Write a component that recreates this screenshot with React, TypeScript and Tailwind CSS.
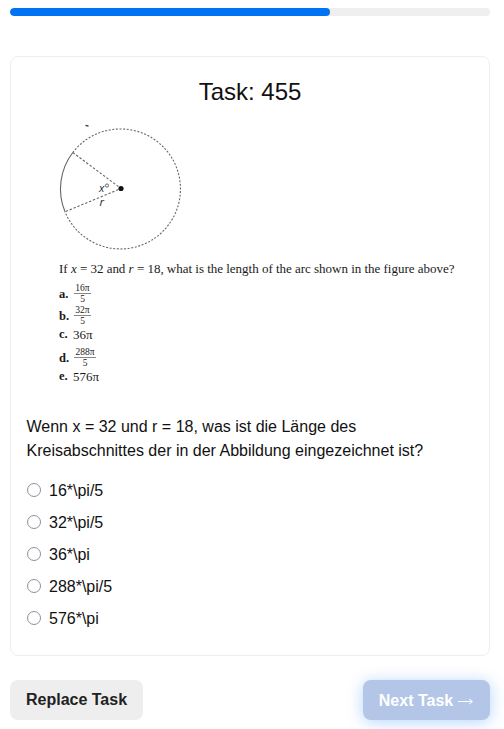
const OPTIONS = ['16*\\pi/5', '32*\\pi/5', '36*\\pi', '288*\\pi/5', '576*\\pi'];

function CircleFigure() {
  return (
    <svg width="170" height="140" viewBox="27 115 170 140" className="block" aria-hidden="true">
      <g fill="none" stroke="#666" strokeWidth="1.1">
        <path d="M72.8 152.5 A60 60 0 1 1 65 211.8" strokeDasharray="2 1.6" />
        <path d="M72.8 152.5 A60 60 0 0 0 65 211.8" />
        <path d="M72.8 152.5 L121 188.5 L65 211.8" strokeDasharray="2.4 1.8" />
      </g>
      <path d="M85.5 125.3 L88.5 126.2" stroke="#333" strokeWidth="1.3" />
      <circle cx="121" cy="188.5" r="2.6" fill="#111" />
      <g fill="#222" fontFamily="'Open Sans', sans-serif" fontStyle="italic">
        <text x="99" y="191.5" fontSize="11">x</text>
        <text x="99.6" y="206" fontSize="11.5">r</text>
      </g>
      <circle cx="107" cy="185.5" r="1.6" fill="none" stroke="#444" strokeWidth="0.8" />
    </svg>
  );
}

function Fraction({ top, width }: { top: string; width: string }) {
  return (
    <span className={`flex flex-col items-center text-[9.5px] leading-[9px] ${width}`}>
      <span className="flex w-full justify-center border-b border-[#888]">{top}</span>
      <span className="pt-px">5</span>
    </span>
  );
}

function Exercise() {
  return (
    <div className="h-[157px] pl-8 font-['Liberation_Serif',serif] text-[12.5px] text-[#1a1a1a]">
      <p className="h-[28px] whitespace-nowrap text-[13px] leading-[28px] tracking-[-0.015px]">
        If <i>x</i> = 32 and <i>r</i> = 18, what is the length of the arc shown in the figure above?
      </p>
      <div className="flex h-[22px] items-center gap-[5px]"><b className="w-[10px]">a.</b><Fraction top="16π" width="w-[17px]" /></div>
      <div className="flex h-[22px] items-center gap-[5px]"><b className="w-[10px]">b.</b><Fraction top="32π" width="w-[17px]" /></div>
      <div className="flex h-[15px] items-center gap-[4px]"><b className="w-[10px]">c.</b><span className="text-[13px]">36π</span></div>
      <div className="mt-1 flex h-6 items-center gap-[5px]"><b className="w-[10px]">d.</b><Fraction top="288π" width="w-[22px]" /></div>
      <div className="flex h-[13px] items-center gap-[4px]"><b className="w-[10px]">e.</b><span className="text-[13px]">576π</span></div>
    </div>
  );
}

export default function App() {
  return (
    <main className="h-[729px] overflow-hidden bg-white px-[10px] pt-2 font-['Liberation_Sans',Arial,sans-serif] text-base text-[#111]">
      <div className="mr-1 h-2 overflow-hidden rounded-full bg-[#efefef]">
        <div className="h-full w-2/3 rounded-full bg-[#0073f5]" />
      </div>
      <section className="mt-10 mr-1 h-[600px] rounded-[8px] border border-[#eee] px-4">
        <h1 className="h-[58px] pt-[17px] text-center text-[24px] leading-[36px]">Task: 455</h1>
        <CircleFigure />
        <Exercise />
        <p className="mt-[3px] -ml-[0.5px] leading-6">
          Wenn x = 32 und r = 18, was ist die Länge des<br />
          Kreisabschnittes der in der Abbildung eingezeichnet ist?
        </p>
        <div className="mt-3 flex flex-col">
          {OPTIONS.map((option) => (
            <label key={option} className="flex h-8 items-center gap-2">
              <input type="radio" name="answer" className="mb-0.5 size-[14px] appearance-none rounded-full border border-[#8f8f9d] bg-white" />
              <span>{option}</span>
            </label>
          ))}
        </div>
      </section>
      <div className="mt-6 mr-1 flex justify-between font-bold">
        <button className="h-10 w-[133px] rounded-[8px] bg-[#eee] text-[#222]">Replace Task</button>
        <button className="flex h-10 w-[127px] items-center justify-center gap-1 rounded-[8px] bg-[#b3c6e7] pt-px text-white shadow-[0_2px_16px_rgba(0,115,245,0.3)]">
          <span>Next Task</span>
          <svg width="17" height="10" viewBox="0 0 17 10" fill="none" stroke="white" aria-hidden="true">
            <path d="M1 5.5H15M12 2.8L15.5 5.5L12 8.2" />
          </svg>
        </button>
      </div>
    </main>
  );
}
